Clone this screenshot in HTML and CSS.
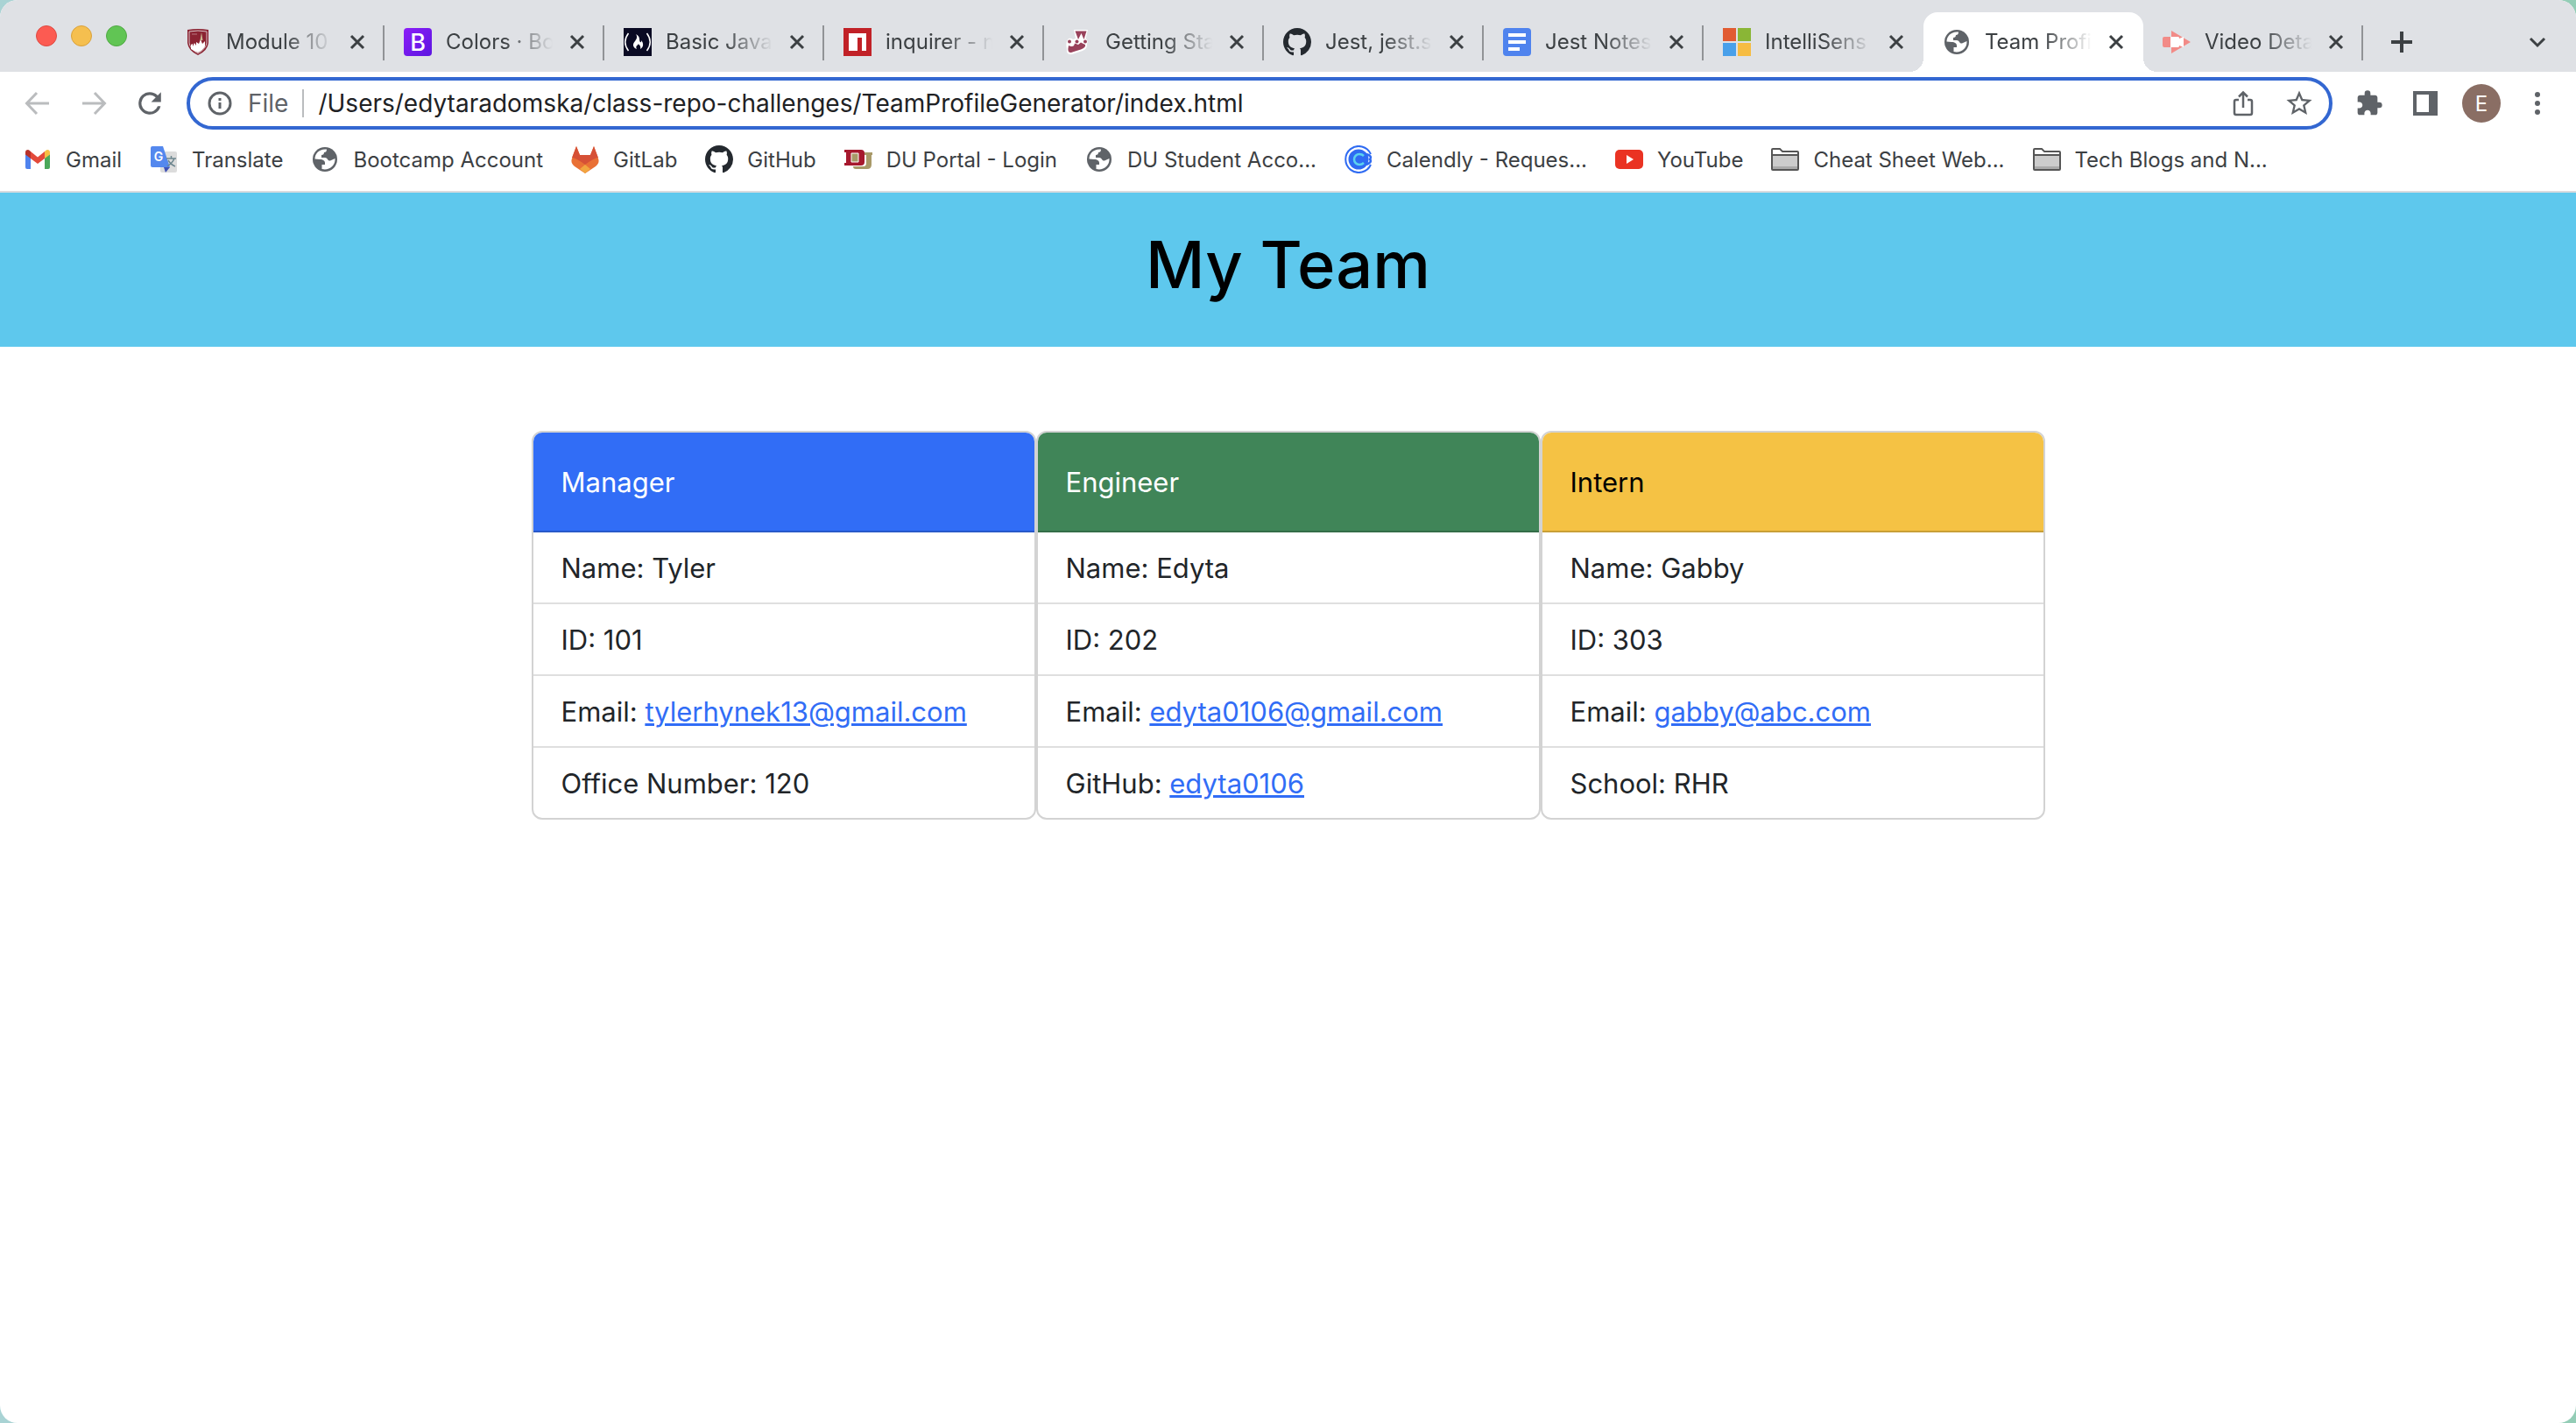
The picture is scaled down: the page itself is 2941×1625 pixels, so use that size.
FILE: index.html
```html
<!DOCTYPE html>
<html lang="en">
<head>
<meta charset="utf-8">
<title>Team Profile</title>
<link rel="stylesheet" href="styles.css">
</head>
<body>
<svg class="sprite" aria-hidden="true">
  <symbol id="close" viewBox="0 0 18 18"><path d="M2 2L16 16M16 2L2 16" stroke="#3c4043" stroke-width="3" fill="none"/></symbol>
  <symbol id="globe" viewBox="0 0 32 32"><circle cx="16" cy="16" r="14" fill="#5f6368"/><path d="M18 4.500C10 3.500 4.500 9 4.500 15.500L10 16C14 16 16 18 16 20V22H12.500V27C20 29 28 24 27.500 15L22 17.500C19 18 19 14 16 14H12V11C14 11 15 10 15 8C17 8 18 7 18 4.500Z" fill="#fff"/></symbol>
  <symbol id="github" viewBox="0 0 16 16"><path fill="#24292f" d="M8 0C3.580 0 0 3.580 0 8c0 3.540 2.290 6.530 5.470 7.590.4.070.55-.17.55-.38 0-.19-.01-.82-.01-1.490-2.010.37-2.530-.49-2.690-.94-.09-.23-.48-.94-.82-1.130-.28-.15-.68-.52-.01-.53.63-.01 1.080.58 1.230.82.72 1.210 1.870.87 2.330.66.070-.52.28-.87.51-1.070-1.780-.2-3.640-.89-3.640-3.950 0-.87.31-1.590.82-2.150-.08-.2-.36-1.020.08-2.120 0 0 .67-.21 2.200.82.64-.18 1.320-.27 2-.27s1.360.09 2 .27c1.530-1.040 2.200-.82 2.200-.82.44 1.100.16 1.920.08 2.120.51.56.82 1.270.82 2.150 0 3.070-1.870 3.750-3.650 3.950.29.25.54.73.54 1.480 0 1.070-.01 1.930-.01 2.200 0 .21.15.46.55.38A8.010 8.010 0 0 0 16 8c0-4.420-3.580-8-8-8z"/></symbol>
  <symbol id="folder" viewBox="0 0 32 32"><path d="M1 27V5Q1 4 2 4H10L13 7H30Q31 7 31 8V27Q31 28 30 28H2Q1 28 1 27Z" fill="#ccc" stroke="#555" stroke-width="2"/><path d="M2 5H9.500L12.500 8H30V10H2Z" fill="#fff"/><path d="M2 11H30" stroke="#555" stroke-width="2"/><path d="M2 25.500H30" stroke="#aaa" stroke-width="3"/></symbol>
</svg>

<div class="window">
  <header class="chrome">
    <div class="strip">
      <div class="lights">
        <button class="light light-close" aria-label="Close window"></button>
        <button class="light light-min" aria-label="Minimize window"></button>
        <button class="light light-max" aria-label="Zoom window"></button>
      </div>
      <nav class="tabs" aria-label="Tabs">
        <div class="tab">
          <svg class="icon" viewBox="0 0 32 32"><path d="M4 2Q16 0 28 2V17Q27 26 16 31Q5 26 4 17Z" fill="#8b2332"/><path d="M6 4Q16 2 26 4V17Q25 24 16 29Q7 24 6 17Z" fill="none" stroke="#d9c3c6" stroke-width="1"/><path d="M8 24V19L10 18V21L12 17L14 20V16L17 18L19 13L21 18L24 15V21Q21 26 16 28Q11 26 8 24Z" fill="#fff"/><path d="M20 5L21.500 14H18.500Z" fill="#cbb991"/><path d="M9 7H15" stroke="#b77780"/></svg>
          <a class="tab-title" href="#">Module 10</a>
          <button class="tab-close" aria-label="Close tab"><svg viewBox="0 0 18 18"><use href="#close"/></svg></button>
        </div>
        <div class="tab">
          <svg class="icon" viewBox="0 0 32 32"><defs><linearGradient id="bs" x2="1" y2="1"><stop stop-color="#8b1df8"/><stop offset="1" stop-color="#5c16e0"/></linearGradient></defs><rect width="32" height="32" rx="4" fill="url(#bs)"/><text class="glyph" x="16" y="26" font-size="27" font-weight="500" fill="#fff">B</text></svg>
          <a class="tab-title" href="#">Colors · Bo</a>
          <button class="tab-close" aria-label="Close tab"><svg viewBox="0 0 18 18"><use href="#close"/></svg></button>
        </div>
        <div class="tab">
          <svg class="icon" viewBox="0 0 32 32"><rect width="32" height="32" fill="#0a0a23"/><path d="M5.500 6Q-2 16 5.500 26M26.500 6Q34 16 26.500 26" fill="none" stroke="#fff" stroke-width="1.500"/><path d="M14 7C20 10 17 14 19 16C20 17 20.500 15 20 14C23 17 23 22 19 24C20 21 18 19 16.500 18C17 20 15 19 14.500 21C14 22 14.500 23 15 24C10 22 10 18 13 15C15 12.500 16 10 14 7Z" fill="#fff"/></svg>
          <a class="tab-title" href="#">Basic JavaS</a>
          <button class="tab-close" aria-label="Close tab"><svg viewBox="0 0 18 18"><use href="#close"/></svg></button>
        </div>
        <div class="tab">
          <svg class="icon" viewBox="0 0 32 32"><rect width="32" height="32" fill="#c12127"/><path d="M6 6H26V26H21V11H16V26H6Z" fill="#fff"/></svg>
          <a class="tab-title" href="#">inquirer - n</a>
          <button class="tab-close" aria-label="Close tab"><svg viewBox="0 0 18 18"><use href="#close"/></svg></button>
        </div>
        <div class="tab">
          <svg class="icon" viewBox="0 0 32 32"><path d="M12 2H28L25.500 12Q29 15 27 18Q28 23 22 26L10 30Q3 31 4 24Q2 16 6 12Q9 11 11 13L14 12Z" fill="#fff"/><path d="M13.500 3.500H26.500L23.500 13L20.500 6L17 13Z" fill="#99425b"/><circle cx="7" cy="15.500" r="2" fill="#99425b"/><circle cx="15.500" cy="15.500" r="2" fill="#99425b"/><circle cx="25" cy="15.500" r="2" fill="#99425b"/><path d="M6 20Q4 29 9 28Q14 26 20 24.500Q26 22 25 19L20 16.500L17 19L13 17.500Q12 23 6 20Z" fill="#99425b"/></svg>
          <a class="tab-title" href="#">Getting Sta</a>
          <button class="tab-close" aria-label="Close tab"><svg viewBox="0 0 18 18"><use href="#close"/></svg></button>
        </div>
        <div class="tab">
          <svg class="icon"><use href="#github"/></svg>
          <a class="tab-title" href="#">Jest, jest.s</a>
          <button class="tab-close" aria-label="Close tab"><svg viewBox="0 0 18 18"><use href="#close"/></svg></button>
        </div>
        <div class="tab">
          <svg class="icon" viewBox="0 0 32 32"><rect width="32" height="32" rx="4" fill="#4f83ee"/><path d="M6 8H26M6 16H26M6 24H19" stroke="#fff" stroke-width="4"/></svg>
          <a class="tab-title" href="#">Jest Notes</a>
          <button class="tab-close" aria-label="Close tab"><svg viewBox="0 0 18 18"><use href="#close"/></svg></button>
        </div>
        <div class="tab tab-before">
          <svg class="icon" viewBox="0 0 32 32"><path d="M0 0H15V15H0Z" fill="#e15b32"/><path d="M17 0H32V15H17Z" fill="#8ab636"/><path d="M0 17H15V32H0Z" fill="#49a0ea"/><path d="M17 17H32V32H17Z" fill="#f6bc42"/></svg>
          <a class="tab-title" href="#">IntelliSens</a>
          <button class="tab-close" aria-label="Close tab"><svg viewBox="0 0 18 18"><use href="#close"/></svg></button>
        </div>
        <div class="tab tab-active">
          <svg class="icon"><use href="#globe"/></svg>
          <a class="tab-title" href="#" aria-current="page">Team Profi</a>
          <button class="tab-close" aria-label="Close tab"><svg viewBox="0 0 18 18"><use href="#close"/></svg></button>
        </div>
        <div class="tab">
          <svg class="icon" viewBox="0 0 32 32"><path d="M10 3L32 16L10 29V22H2Q0 22 0 20V12Q0 10 2 10H10Z" fill="#f28b87"/><path d="M9 10H18Q19 10 19 12L24 10V22L19 20Q19 22 18 22H9Z" fill="#fff"/></svg>
          <a class="tab-title" href="#">Video Deta</a>
          <button class="tab-close" aria-label="Close tab"><svg viewBox="0 0 18 18"><use href="#close"/></svg></button>
        </div>
      </nav>
      <button class="tool" aria-label="New tab"><svg viewBox="0 0 32 32"><path d="M16 4V28M4 16H28" stroke="#3c4043" stroke-width="4"/></svg></button>
      <button class="tool tool-end" aria-label="Search tabs"><svg viewBox="0 0 32 32"><path d="M8 12L16 20L24 12" fill="none" stroke="#3c4043" stroke-width="3"/></svg></button>
    </div>

    <div class="toolbar">
      <div class="nav">
        <button class="tool" aria-label="Back"><svg viewBox="0 0 32 32"><path d="M29 16H4M15 4L3.500 16L15 28" fill="none" stroke="#babcbe" stroke-width="3"/></svg></button>
        <button class="tool" aria-label="Forward"><svg viewBox="0 0 32 32"><path d="M3 16H28M17 4L28.500 16L17 28" fill="none" stroke="#babcbe" stroke-width="3"/></svg></button>
        <button class="tool" aria-label="Reload"><svg viewBox="2 2 20 20"><path fill="#5f6368" d="M17.650 6.350A7.958 7.958 0 0 0 12 4a8 8 0 1 0 7.730 10h-2.080A6 6 0 1 1 12 6c1.660 0 3.140.69 4.220 1.780L13 11h7V4l-2.350 2.350z"/></svg></button>
      </div>
      <form class="omnibox">
        <svg class="icon" viewBox="0 0 32 32"><circle cx="16" cy="16" r="12" fill="none" stroke="#5f6368" stroke-width="3"/><path d="M16 15V22M16 10V13" stroke="#5f6368" stroke-width="3"/></svg>
        <label class="scheme" for="url">File</label>
        <input class="url" id="url" type="text" value="/Users/edytaradomska/class-repo-challenges/TeamProfileGenerator/index.html">
        <button class="tool" type="button" aria-label="Share"><svg viewBox="0 0 32 32"><path d="M11 12H8Q6 12 6 14V27Q6 29 8 29H24Q26 29 26 27V14Q26 12 24 12H21M16 21V4M11 8.500L16 3.500L21 8.500" fill="none" stroke="#5f6368" stroke-width="2.500"/></svg></button>
        <button class="tool" type="button" aria-label="Bookmark"><svg viewBox="1 1 22 22"><path fill="#5f6368" d="M22 9.240l-7.190-.62L12 2 9.190 8.630 2 9.240l5.460 4.730L5.820 21 12 17.270 18.180 21l-1.630-7.030L22 9.240zM12 15.400l-3.760 2.270 1-4.280-3.320-2.880 4.380-.38L12 6.100l1.710 4.040 4.380.38-3.320 2.880 1 4.280L12 15.400z"/></svg></button>
      </form>
      <div class="actions">
        <button class="tool" aria-label="Extensions"><svg viewBox="0 0 24 24"><path fill="#5f6368" d="M20.500 11H19V7c0-1.100-.9-2-2-2h-4V3.500a2.500 2.500 0 0 0-5 0V5H4c-1.100 0-1.990.9-1.990 2v3.800H3.500c1.490 0 2.700 1.210 2.700 2.700s-1.210 2.700-2.700 2.700H2V20c0 1.100.9 2 2 2h3.800v-1.500c0-1.490 1.210-2.700 2.700-2.700s2.700 1.210 2.700 2.700V22H17c1.100 0 2-.9 2-2v-4h1.500a2.500 2.500 0 0 0 0-5z"/></svg></button>
        <button class="tool" aria-label="Side panel"><svg viewBox="0 0 32 32"><path fill="#5f6368" fill-rule="evenodd" d="M2 2H30V30H2ZM6 6V26H20V6Z"/></svg></button>
        <button class="avatar" aria-label="Profile">E</button>
        <button class="tool" aria-label="Menu"><svg viewBox="0 0 32 32"><circle cx="16" cy="6" r="3" fill="#5f6368"/><circle cx="16" cy="16" r="3" fill="#5f6368"/><circle cx="16" cy="26" r="3" fill="#5f6368"/></svg></button>
      </div>
    </div>

    <nav class="bookmarks" aria-label="Bookmarks">
      <a class="bookmark" href="#"><svg class="icon" viewBox="0 0 32 32"><path d="M2 8V25Q2 27 4 27H8V14Z" fill="#4f83ee"/><path d="M30 8V25Q30 27 28 27H24V14Z" fill="#4ba85a"/><path d="M8 7L16 13.500L24 7V15L16 21L8 15Z" fill="#e34a3b"/><path d="M2 8Q2 5 5 5Q6 5 8 7V15L2 10.500Z" fill="#b8322a"/><path d="M30 8Q30 5 27 5Q26 5 24 7V15L30 10.500Z" fill="#f6bf43"/></svg>Gmail</a>
      <a class="bookmark" href="#"><svg class="icon" viewBox="0 0 32 32"><rect x="12" y="7" width="19" height="24" rx="2" fill="#dcdcdc"/><path d="M16 25H23L18 31Z" fill="#3f51b5"/><path d="M3 1H15L23 25H3Q1 25 1 23V3Q1 1 3 1Z" fill="#5488ee"/><text class="glyph" x="10" y="18" font-size="14" font-weight="600" fill="#fff">G</text><path d="M19 15H30M24.500 12V15M28 15Q26 20 20 24M21 17Q24 22 29 24" fill="none" stroke="#6d868f" stroke-width="1.500"/></svg>Translate</a>
      <a class="bookmark" href="#"><svg class="icon"><use href="#globe"/></svg>Bootcamp Account</a>
      <a class="bookmark" href="#"><svg class="icon" viewBox="0 0 32 32"><path d="M6 1L10 11H22L26 1L31 15Q33 20 28 24L16 32L4 24Q-1 20 1 15Z" fill="#e97035"/><path d="M6 1L10 11H22L26 1L31 14Q27 14 16 22Q5 14 1 14Z" fill="#d65036"/><path d="M16 22L22 27L16 32L10 27Z" fill="#f2a640"/></svg>GitLab</a>
      <a class="bookmark" href="#"><svg class="icon"><use href="#github"/></svg>GitHub</a>
      <a class="bookmark" href="#"><svg class="icon" viewBox="0 0 32 32"><path d="M20 8H32V11H31V22Q31 27 26 27H13Q10 27 10 24H22Q25 24 25 20V11H20Z" fill="#a89968"/><path fill="#a6192e" fill-rule="evenodd" d="M0 5H19Q23 5 23 9V19Q23 23 19 23H0V20H2V8H0ZM8 9V19H16V9Z"/><path d="M8 9H16V19H8Z" fill="#a89968" stroke="#fff"/></svg>DU Portal - Login</a>
      <a class="bookmark" href="#"><svg class="icon"><use href="#globe"/></svg>DU Student Acco...</a>
      <a class="bookmark" href="#"><svg class="icon" viewBox="0 0 32 32"><path d="M30 10A15 15 0 1 0 30 22" fill="none" stroke="#2f6bf2" stroke-width="2"/><circle cx="16" cy="16" r="11.500" fill="#2f6bf2"/><path d="M22 12Q20 10 17 10A6 6 0 0 0 17 22Q20 22 22 20" fill="none" stroke="#5cd3ee" stroke-width="2.500"/><path d="M25 10Q32 12 29 16Q32 19 25 22" fill="none" stroke="#2f6bf2" stroke-width="2.500"/></svg>Calendly - Reques...</a>
      <a class="bookmark" href="#"><svg class="icon" viewBox="0 0 32 32"><rect y="5" width="32" height="22" rx="5" fill="#ea3323"/><path d="M13 11L21 16L13 21Z" fill="#fff"/></svg>YouTube</a>
      <a class="bookmark" href="#"><svg class="icon"><use href="#folder"/></svg>Cheat Sheet Web...</a>
      <a class="bookmark" href="#"><svg class="icon"><use href="#folder"/></svg>Tech Blogs and N...</a>
    </nav>
  </header>

  <main class="page">
    <div class="banner"><h1>My Team</h1></div>
    <div class="cards">
      <section class="card">
        <h2 class="card-header manager">Manager</h2>
        <ul class="rows">
          <li>Name: Tyler</li>
          <li>ID: 101</li>
          <li>Email: <a href="mailto:tylerhynek13@gmail.com">tylerhynek13@gmail.com</a></li>
          <li>Office Number: 120</li>
        </ul>
      </section>
      <section class="card">
        <h2 class="card-header engineer">Engineer</h2>
        <ul class="rows">
          <li>Name: Edyta</li>
          <li>ID: 202</li>
          <li>Email: <a href="mailto:edyta0106@gmail.com">edyta0106@gmail.com</a></li>
          <li>GitHub: <a href="#">edyta0106</a></li>
        </ul>
      </section>
      <section class="card">
        <h2 class="card-header intern">Intern</h2>
        <ul class="rows">
          <li>Name: Gabby</li>
          <li>ID: 303</li>
          <li>Email: <a href="mailto:gabby@abc.com">gabby@abc.com</a></li>
          <li>School: RHR</li>
        </ul>
      </section>
    </div>
  </main>
</div>
</body>
</html>
```

FILE: styles.css
```css
* { box-sizing: border-box; }

body {
  margin: 0;
  font-family: Inter, "Liberation Sans", sans-serif;
  color: #212529;
  background: linear-gradient(90deg, #a9d3d4, #93cdb6);
}

.sprite { display: none; }

.window {
  display: flex;
  flex-direction: column;
  min-height: 100vh;
  overflow: hidden;
  background: #fff;
  border-radius: 20px;
}

button {
  padding: 0;
  border: 0;
  background: none;
  font: inherit;
}

.icon {
  flex: none;
  display: block;
  width: 32px;
  height: 32px;
}

.glyph {
  font-family: Inter, sans-serif;
  text-anchor: middle;
}

/* Browser chrome */
.chrome {
  font-size: 24px;
  border-bottom: 2px solid #d9dbde;
}

.strip {
  display: flex;
  align-items: center;
  height: 82px;
  padding-right: 28px;
  background: #dfe1e5;
}

.lights {
  display: flex;
  gap: 16px;
  flex: none;
  width: 188px;
  padding-left: 41px;
}

.light {
  width: 24px;
  height: 24px;
  border: 1px solid;
  border-radius: 50%;
}

.light-close { background: #fc5b52; border-color: #dd4a42; }
.light-min { background: #f5bf4f; border-color: #d9a13c; }
.light-max { background: #61c554; border-color: #50a944; }

.tabs {
  display: flex;
  flex: 0 1 2510px;
  min-width: 0;
  align-self: flex-end;
}

.tab {
  position: relative;
  display: flex;
  align-items: center;
  flex: 1 1 0;
  min-width: 0;
  height: 68px;
  padding: 0 22px;
}

.tab::after {
  content: "";
  position: absolute;
  right: 0;
  top: 15px;
  width: 2px;
  height: 40px;
  background: #919396;
}

.tab-title {
  flex: 1;
  min-width: 0;
  margin: 0 8px 0 16px;
  line-height: 32px;
  white-space: nowrap;
  color: #3c4043;
  text-decoration: none;
  mask-image: linear-gradient(90deg, #000 50%, transparent 92%);
}

.tab-close,
.tab-close svg {
  display: block;
  flex: none;
  width: 18px;
  height: 18px;
}

.tab-before::after { display: none; }

.tab-active {
  background: #fff;
  border-radius: 16px 16px 0 0;
}

.tab-active::before,
.tab-active::after {
  content: "";
  position: absolute;
  top: auto;
  bottom: 0;
  width: 16px;
  height: 16px;
}

.tab-active::before {
  left: -16px;
  background: radial-gradient(circle at 0 0, #dfe1e5 16px, #fff 16px);
}

.tab-active::after {
  right: -16px;
  background: radial-gradient(circle at 100% 0, #dfe1e5 16px, #fff 16px);
}

.tool,
.tool svg {
  display: block;
  flex: none;
  width: 32px;
  height: 32px;
}

.strip > .tool { margin: 14px 0 0 28px; }
.strip > .tool-end { margin-left: auto; }

.toolbar {
  display: flex;
  align-items: center;
  height: 72px;
  padding: 0 28px 0 27px;
}

.nav {
  display: flex;
  gap: 32px;
  margin-right: 26px;
}

.omnibox {
  display: flex;
  align-items: center;
  flex: 1;
  min-width: 0;
  height: 60px;
  padding: 0 18px;
  border: 4px solid #3367d1;
  border-radius: 30px;
  font-size: 28px;
}

.scheme {
  margin-left: 16px;
  padding-right: 16px;
  border-right: 2px solid #babcbe;
  line-height: 32px;
  color: #5f6368;
}

.url {
  flex: 1;
  min-width: 0;
  padding: 0;
  margin-left: 16px;
  border: 0;
  outline: 0;
  font: inherit;
  color: #202124;
}

.omnibox .tool { margin-left: 32px; }

.actions {
  display: flex;
  align-items: center;
  gap: 32px;
  margin-left: 26px;
}

.avatar {
  width: 44px;
  height: 44px;
  margin: 0 -6px;
  border-radius: 50%;
  background: #8a6e64;
  color: #fff;
  font-size: 24px;
}

.bookmarks {
  display: flex;
  align-items: center;
  gap: 32px;
  height: 64px;
  padding: 0 27px 8px;
}

.bookmark {
  display: flex;
  align-items: center;
  gap: 16px;
  white-space: nowrap;
  color: #3c4043;
  text-decoration: none;
}

/* Team page */
.banner {
  padding: 34px 32px 46px;
  background: #5ec8ed;
  color: #000;
  text-align: center;
}

h1 {
  margin: 0;
  font-size: 74px;
  font-weight: 500;
  line-height: 96px;
}

.cards {
  display: grid;
  grid-template-columns: repeat(3, 1fr);
  max-width: 1728px;
  margin: 96px auto;
  font-size: 31px;
  line-height: 48px;
}

.card {
  overflow: hidden;
  border: 2px solid #d3d3d3;
  border-radius: 12px;
}

.card-header {
  margin: 0;
  padding: 33px 32px 31px;
  border-bottom: 2px solid rgba(0, 0, 0, 0.18);
  font-size: 31px;
  font-weight: 400;
}

.manager { background: #316df6; color: #fff; }
.engineer { background: #408558; color: #fff; }
.intern { background: #f5c244; color: #000; }

.rows {
  margin: 0;
  padding: 0;
  list-style: none;
}

.rows li { padding: 17px 32px 15px; }
.rows li + li { border-top: 2px solid #dfdfdf; }
.rows a { color: #316df6; }
```
